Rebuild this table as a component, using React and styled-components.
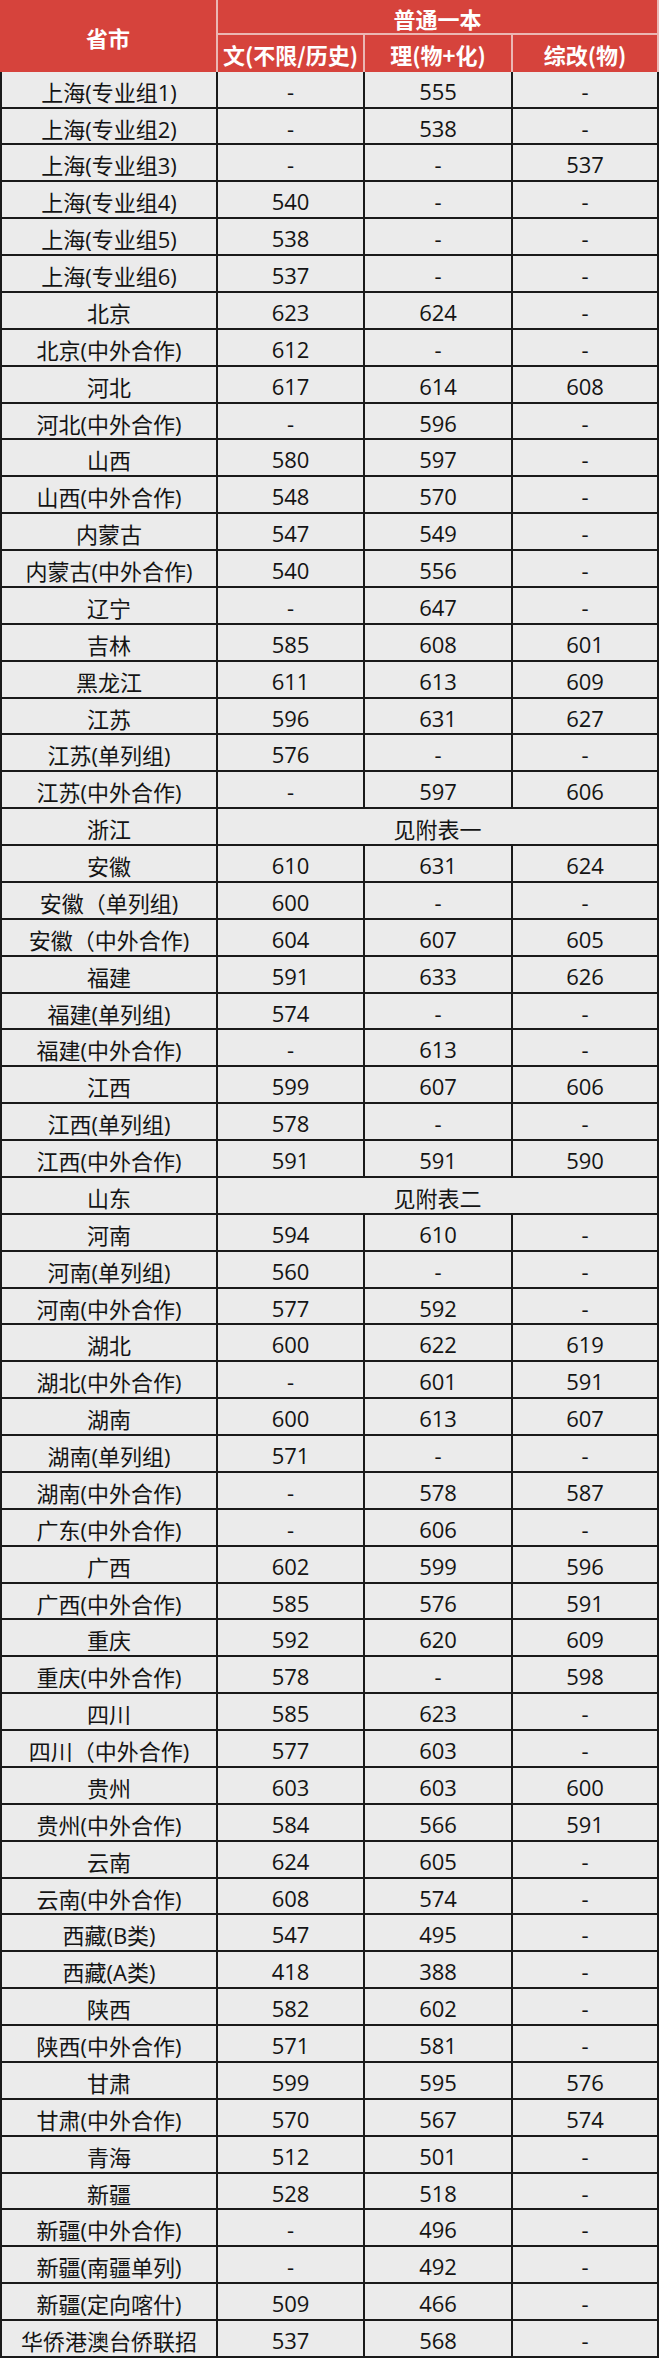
import React from "react";
import styled, { createGlobalStyle } from "styled-components";

const GlobalStyle = createGlobalStyle`
    body {
        margin: 0;
        background: #fff;
        font-family: "Open Sans", "Noto Sans CJK SC", sans-serif;
    }
`;

const Table = styled.div`
    display: grid;
    width: 659px;
    grid-template-columns: 218px 147px 148px 146px;
    grid-template-rows: 35px 36.7px;
    grid-auto-rows: 36.875px;
`;

const HeadCell = styled.div`
    box-sizing: border-box;
    display: flex;
    align-items: center;
    justify-content: center;
    background: #d6433c;
    color: #fff;
    font-family: "Noto Sans CJK SC", sans-serif;
    font-weight: 700;
    font-size: 22px;
    border-right: 2px solid #ebb7b3;
    border-bottom: ${(p) => (p.$top ? "2px solid #ebb7b3" : "none")};
    grid-row: ${(p) => p.$rows || "auto"};
    grid-column: ${(p) => p.$cols || "auto"};
    padding-top: 2px;
    white-space: nowrap;
`;

const Cell = styled.div`
    box-sizing: border-box;
    display: flex;
    align-items: center;
    justify-content: center;
    background: #ebebeb;
    color: #141414;
    font-size: 22px;
    padding-top: 3px;
    border-right: 2px solid #1a1a1a;
    border-bottom: 2px solid #1a1a1a;
    border-left: ${(p) => (p.$first ? "2px solid #1a1a1a" : "none")};
    grid-column: ${(p) => (p.$span ? `span ${p.$span}` : "auto")};
    white-space: nowrap;
`;

// 省市, 文(不限/历史), 理(物+化), 综改(物) — a single value spans the three score columns
const rows = [
    ["上海(专业组1)", "-", "555", "-"],
    ["上海(专业组2)", "-", "538", "-"],
    ["上海(专业组3)", "-", "-", "537"],
    ["上海(专业组4)", "540", "-", "-"],
    ["上海(专业组5)", "538", "-", "-"],
    ["上海(专业组6)", "537", "-", "-"],
    ["北京", "623", "624", "-"],
    ["北京(中外合作)", "612", "-", "-"],
    ["河北", "617", "614", "608"],
    ["河北(中外合作)", "-", "596", "-"],
    ["山西", "580", "597", "-"],
    ["山西(中外合作)", "548", "570", "-"],
    ["内蒙古", "547", "549", "-"],
    ["内蒙古(中外合作)", "540", "556", "-"],
    ["辽宁", "-", "647", "-"],
    ["吉林", "585", "608", "601"],
    ["黑龙江", "611", "613", "609"],
    ["江苏", "596", "631", "627"],
    ["江苏(单列组)", "576", "-", "-"],
    ["江苏(中外合作)", "-", "597", "606"],
    ["浙江", "见附表一"],
    ["安徽", "610", "631", "624"],
    ["安徽（单列组)", "600", "-", "-"],
    ["安徽（中外合作)", "604", "607", "605"],
    ["福建", "591", "633", "626"],
    ["福建(单列组)", "574", "-", "-"],
    ["福建(中外合作)", "-", "613", "-"],
    ["江西", "599", "607", "606"],
    ["江西(单列组)", "578", "-", "-"],
    ["江西(中外合作)", "591", "591", "590"],
    ["山东", "见附表二"],
    ["河南", "594", "610", "-"],
    ["河南(单列组)", "560", "-", "-"],
    ["河南(中外合作)", "577", "592", "-"],
    ["湖北", "600", "622", "619"],
    ["湖北(中外合作)", "-", "601", "591"],
    ["湖南", "600", "613", "607"],
    ["湖南(单列组)", "571", "-", "-"],
    ["湖南(中外合作)", "-", "578", "587"],
    ["广东(中外合作)", "-", "606", "-"],
    ["广西", "602", "599", "596"],
    ["广西(中外合作)", "585", "576", "591"],
    ["重庆", "592", "620", "609"],
    ["重庆(中外合作)", "578", "-", "598"],
    ["四川", "585", "623", "-"],
    ["四川（中外合作)", "577", "603", "-"],
    ["贵州", "603", "603", "600"],
    ["贵州(中外合作)", "584", "566", "591"],
    ["云南", "624", "605", "-"],
    ["云南(中外合作)", "608", "574", "-"],
    ["西藏(B类)", "547", "495", "-"],
    ["西藏(A类)", "418", "388", "-"],
    ["陕西", "582", "602", "-"],
    ["陕西(中外合作)", "571", "581", "-"],
    ["甘肃", "599", "595", "576"],
    ["甘肃(中外合作)", "570", "567", "574"],
    ["青海", "512", "501", "-"],
    ["新疆", "528", "518", "-"],
    ["新疆(中外合作)", "-", "496", "-"],
    ["新疆(南疆单列)", "-", "492", "-"],
    ["新疆(定向喀什)", "509", "466", "-"],
    ["华侨港澳台侨联招", "537", "568", "-"],
];

export default function App() {
    return (
        <>
            <GlobalStyle />
            <Table>
                <HeadCell $rows="1 / 3">省市</HeadCell>
                <HeadCell $cols="2 / 5" $top>普通一本</HeadCell>
                <HeadCell>文(不限/历史)</HeadCell>
                <HeadCell>理(物+化)</HeadCell>
                <HeadCell>综改(物)</HeadCell>
                {rows.map(([name, ...vals]) => (
                    <React.Fragment key={name}>
                        <Cell $first>{name}</Cell>
                        {vals.length === 1 ? (
                            <Cell $span={3}>{vals[0]}</Cell>
                        ) : (
                            vals.map((v, i) => <Cell key={i}>{v}</Cell>)
                        )}
                    </React.Fragment>
                ))}
            </Table>
        </>
    );
}
